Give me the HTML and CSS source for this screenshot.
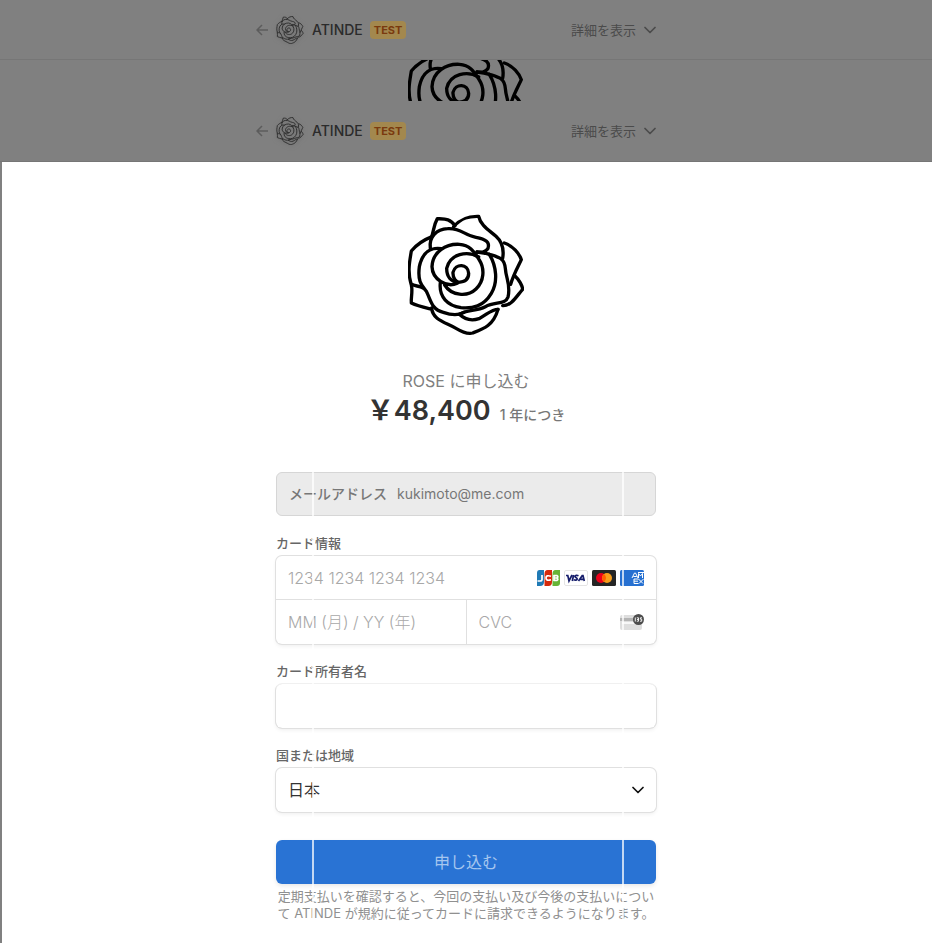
FILE: index.html
```html
<!DOCTYPE html>
<html lang="ja">
<head>
<meta charset="utf-8">
<title>ATINDE</title>
<link rel="stylesheet" href="styles.css">
</head>
<body>
<svg class="defs" aria-hidden="true">
  <symbol id="rose" viewBox="36 27 348 363">
    <g fill="none" stroke="currentColor" stroke-linecap="round" stroke-linejoin="round">
      <path d="M106 97C114 79 112 62 124 41C146 42 162 40 177 62"/>
      <path d="M173 65C196 38 220 33 248 34C254 62 280 76 300 94C322 114 324 136 320 160"/>
      <path d="M103 130C98 96 122 72 155 71C194 68 205 91 240 97C270 102 282 113 276 130C270 140 256 143 243 141"/>
      <path d="M108 95C80 106 60 121 46 138C41 170 34 198 45 236C55 246 70 240 82 250"/>
      <path d="M136 131C105 126 79 142 70 185C64 232 79 243 91 259C105 286 106 313 142 322C164 330 187 332 204 322"/>
      <path d="M46 240C51 260 44 280 46 294C65 303 84 307 105 312"/>
      <path d="M107 309C110 346 150 352 180 370C200 382 215 388 230 384C262 372 292 362 306 313"/>
      <path d="M190 328C205 342 225 349 249 341C272 330 285 313 306 313"/>
      <path d="M190 328C214 312 240 320 268 305C298 289 328 300 336 276C345 240 330 222 328 190C325 160 312 158 280 148"/>
      <path d="M325 114C351 122 370 146 376 164C367 184 353 207 344 238"/>
      <path d="M357 213C369 224 379 242 380 253C364 270 346 304 320 302"/>
      <path d="M243 141C262 143 274 146 280 148C302 184 306 232 286 265C262 305 230 311 195 308C155 302 128 276 133 233"/>
      <path d="M184 235C150 249 109 222 108 185C110 140 150 116 190 118C225 121 235 142 250 165C267 192 264 229 240 252C214 277 166 272 146 240"/>
      <path d="M248 156C214 136 162 146 152 190C152 216 165 231 188 232C207 231 218 222 218 205C216 176 179 174 171 202C170 219 180 232 190 232"/>
    </g>
  </symbol>
  <symbol id="back" viewBox="0 0 12 12"><path d="M12 6H1M6 1L1 6l5 5" fill="none" stroke="currentColor" stroke-width="1.5"/></symbol>
  <symbol id="down" viewBox="0 0 12 8"><path d="M1 1.5l5 5 5-5" fill="none" stroke="currentColor" stroke-width="1.7" stroke-linecap="round" stroke-linejoin="round"/></symbol>
</svg>

<div class="top">
  <header class="bar">
    <div class="bar-inner">
      <a class="brand" href="#"><svg class="back"><use href="#back"/></svg><svg class="avatar"><use href="#rose"/></svg><span>ATINDE</span></a>
      <span class="tag">TEST</span>
      <button class="details" type="button">詳細を表示<svg class="chev"><use href="#down"/></svg></button>
    </div>
  </header>
  <div class="peek"><svg class="rose"><use href="#rose"/></svg></div>
  <header class="bar">
    <div class="bar-inner">
      <a class="brand" href="#"><svg class="back"><use href="#back"/></svg><svg class="avatar"><use href="#rose"/></svg><span>ATINDE</span></a>
      <span class="tag">TEST</span>
      <button class="details" type="button">詳細を表示<svg class="chev"><use href="#down"/></svg></button>
    </div>
  </header>
</div>

<main class="page">
  <svg class="rose"><use href="#rose"/></svg>
  <h1 class="plan">ROSE に申し込む</h1>
  <p class="price"><strong>&#xFFE5;48,400</strong><span>1 年につき</span></p>

  <form class="form">
    <div class="email"><label for="email">メールアドレス</label><input id="email" type="email" value="kukimoto@me.com" readonly></div>

    <label class="label" for="number">カード情報</label>
    <div class="box card">
      <div class="row">
        <input id="number" type="text" placeholder="1234 1234 1234 1234">
        <div class="brands">
          <svg viewBox="0 0 24 16"><path fill="#1f7ab5" d="M3.500 0H8v12q0 4-4 4H1V3q0-3 2.500-3z"/><path fill="#d42a0c" d="M11.500 0H16v12q0 4-3.500 4h-4V4q0-4 3-4z"/><path fill="#66b436" d="M19.500 0H24v13q0 3-3 3h-4.500V4q0-4 3-4z"/><g fill="none" stroke="#fff" stroke-width="1.700"><path d="M6 5v4.500q0 1.500-2 1.500H1.500M15 6.200q-5-1.500-5 1.800t5 1.800M18 5v6M17.500 5.600H21q1.700 1.100 0 2.400h-3.500H21q1.700 1.300 0 2.400h-3.500"/></g></svg>
          <svg viewBox="0 0 24 16"><rect x=".5" y=".5" width="23" height="15" rx="1.500" fill="#fff" stroke="#e4e4e4"/><g fill="none" stroke="#171e6c" stroke-width="1.700"><path d="M2 5.500h1.800L5 11l3-6M9.600 5l-1.300 6M14.500 5.700c-1.500-.7-3.500-.5-3.500.8s2.500 1.200 2.200 2.500-2 1.400-3.400.8M14.500 11l3.700-5.300h.8l1.300 5.300M16.500 9.400h3.500"/></g></svg>
          <svg viewBox="0 0 24 16"><rect width="24" height="16" rx="1.500" fill="#252525"/><circle cx="9" cy="8" r="5" fill="#eb001b"/><circle cx="15" cy="8" r="5" fill="#f79e1b"/><path d="M12 4a5 5 0 0 1 0 8 5 5 0 0 1 0-8z" fill="#ff5f00"/></svg>
          <svg viewBox="0 0 24 16"><rect width="24" height="16" rx="1.500" fill="#2670d1"/><path d="M12 8l2.500-5h1L18 8M13.300 6.500h3.500M18.500 8V3.500l2 2.500 2-2.500V8M18 2.500h6M18.500 13.500H14V9h4.500M14 11.200h4M18.500 9l4.500 4.500M23.500 9L19 13.500" fill="none" stroke="#fff" stroke-width="1"/></svg>
        </div>
      </div>
      <div class="row split">
        <input type="text" placeholder="MM (月) / YY (年)" aria-label="有効期限">
        <div class="cvc">
          <input type="text" placeholder="CVC" aria-label="CVC">
          <svg viewBox="0 0 24 16"><rect y="1" width="22" height="15" rx="2" fill="#dedede"/><rect y="4" width="22" height="3" fill="#b4b4b4"/><rect x="2" y="8" width="18" height="2" fill="#f7f7f7"/><circle cx="18.500" cy="5.500" r="5.500" fill="#4d4d4d"/><path d="M15.300 3.500v4M16.800 3.800h1.700v3.400h-1.700M17 5.500h1.500M22 3.800h-1.600v1.400h1.300v2H20" fill="none" stroke="#fff" stroke-width=".9"/></svg>
        </div>
      </div>
    </div>

    <label class="label" for="holder">カード所有者名</label>
    <div class="box holder"><input id="holder" type="text"></div>

    <label class="label" for="country">国または地域</label>
    <div class="box country">
      <select id="country"><option>日本</option></select>
      <svg class="chev"><use href="#down"/></svg>
    </div>

    <button class="submit" type="submit">申し込む</button>
    <p class="terms">定期支払いを確認すると、今回の支払い及び今後の支払いについて ATINDE が規約に従ってカードに請求できるようになります。</p>
  </form>
</main>
</body>
</html>
```
FILE: styles.css
```css
* { box-sizing: border-box; }
body, h1, p { margin: 0; }
body {
  background: #fff;
  color: #333;
  font: 14px/20px Inter, "Noto Sans CJK JP", sans-serif;
}
input, select, button {
  font: inherit;
  color: inherit;
  border: 0;
  padding: 0;
  background: none;
  outline: 0;
}
.defs { position: absolute; width: 0; height: 0; }

.top { background: #808080; }
.bar { border-bottom: 1px solid #767676; }
.bar-inner {
  display: flex;
  align-items: center;
  width: 100%;
  max-width: 400px;
  height: 60px;
  margin: 0 auto;
  padding-right: 10px;
}
.top .bar:first-child .bar-inner { height: 59px; }
.brand {
  display: flex;
  align-items: center;
  color: #2b2b2b;
  font-weight: 500;
  text-decoration: none;
}
.back { width: 12px; height: 12px; margin-right: 8px; margin-left: -10px; color: #5c5c5c; }
.avatar {
  width: 28px;
  height: 28px;
  margin-right: 8px;
  color: #2b2b2b;
  stroke-width: 12px;
  filter: drop-shadow(0 1px 2px #5558);
}
.tag {
  margin-left: 7px;
  padding: 0 4px;
  border-radius: 4px;
  background: #a3884e;
  color: #7a3a0e;
  font-size: 11px;
  font-weight: 700;
  line-height: 18px;
}
.details {
  display: flex;
  align-items: center;
  gap: 8px;
  margin-left: auto;
  color: #4b4b4b;
  font-size: 13px;
}
.chev { width: 12px; height: 8px; }
.peek { height: 41px; overflow: hidden; }
.rose {
  display: block;
  width: 116px;
  height: 121px;
  margin: 0 auto;
  color: #000;
  stroke-width: 10px;
}
.peek .rose { margin-top: -26px; }

.page {
  padding: 52px 0 21px;
  box-shadow: inset 2px 0 #808080;
  text-align: center;
}
.plan {
  margin-top: 34px;
  color: #808080;
  font-size: 16px;
  font-weight: 400;
  line-height: 24px;
}
.price {
  display: flex;
  align-items: baseline;
  justify-content: center;
  gap: 9px;
  height: 36px;
  line-height: 36px;
}
.price strong { font-size: 27px; font-weight: 600; }
.price span { color: #777; font-size: 14px; font-weight: 500; }

.form {
  position: relative;
  width: 100%;
  max-width: 380px;
  margin: 43px auto 0;
  text-align: left;
}
/* pale rules running down the form */
.form::after {
  content: "";
  position: absolute;
  inset: 0 32px 0 36px;
  border: solid #ffffffb8;
  border-width: 0 2px;
  pointer-events: none;
}
.email {
  display: flex;
  align-items: center;
  gap: 10px;
  height: 44px;
  padding: 0 12px;
  border: 1px solid #d6d6d6;
  border-radius: 6px;
  background: #ebebeb;
  color: #777;
}
.email label { flex: none; font-weight: 500; }
.email input { flex: 1; min-width: 0; }
.label {
  display: block;
  margin: 19px 0 5px;
  color: #666;
  font-size: 13px;
  font-weight: 500;
  line-height: 16px;
}
.box {
  border-radius: 6px;
  box-shadow: 0 0 0 1px #e0e0e0, 0 2px 4px #00000012;
  font-size: 16px;
}
.box input { flex: 1; width: 100%; min-width: 0; height: 100%; padding-left: 12px; }
.box input::placeholder { color: #a8a8a8; font-weight: 300; opacity: 1; }
.row { display: flex; align-items: center; height: 43px; }
.row + .row { height: 45px; border-top: 1px solid #e0e0e0; }
.brands { display: flex; gap: 4px; padding-right: 12px; }
.brands svg, .cvc svg { width: 24px; height: 16px; }
.split > * { flex: 1; }
.cvc {
  display: flex;
  align-items: center;
  height: 100%;
  padding-right: 12px;
  border-left: 1px solid #e0e0e0;
}
.holder {
  height: 44px;
  box-shadow: 0 -1px #f0f0f0, -1px 0 #e0e0e0, 1px 0 #e0e0e0, 0 1px #e0e0e0, 0 2px 4px #00000012;
}
.country { display: flex; align-items: center; height: 44px; padding: 0 12px; }
.country select { flex: 1; height: 100%; appearance: none; }
.country .chev { color: #111; }
.submit {
  display: block;
  width: 100%;
  height: 44px;
  margin-top: 28px;
  border-radius: 6px;
  background: #2973d4;
  box-shadow: 0 2px 4px #00000018;
  color: #a5c6ef;
  font-size: 16px;
}
.terms {
  padding-top: 4px;
  color: #909090;
  font-size: 13px;
  line-height: 17px;
  text-align: center;
}
```
